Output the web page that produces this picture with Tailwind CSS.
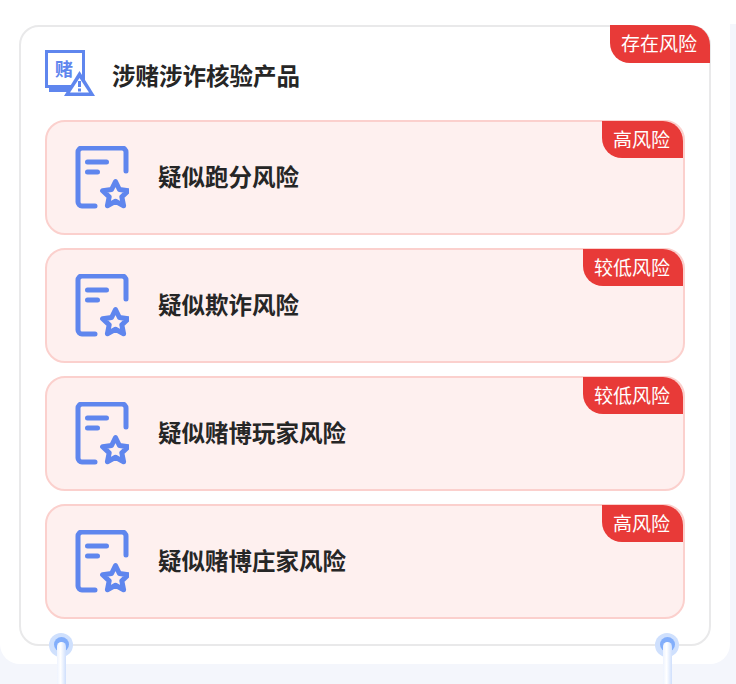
<!DOCTYPE html>
<html lang="zh-CN">
  <head>
    <meta charset="UTF-8" />
    <meta name="viewport" content="width=device-width, initial-scale=1.0" />
    <title>涉赌涉诈核验产品</title>
    <script src="https://cdn.jsdelivr.net/npm/@tailwindcss/browser@4"></script>
  </head>
  <body class="relative h-[684px] w-[736px] overflow-hidden bg-[#f4f6fc] font-['Noto_Sans_CJK_SC','Noto_Sans',sans-serif]">
    <svg width="0" height="0" class="absolute">
      <symbol id="doc-star" viewBox="0 0 54 63">
        <path d="M51 25V6a4 4 0 0 0-4-4H7a4 4 0 0 0-4 4v50a4 4 0 0 0 4 4h13" fill="none" stroke="#5f86ee" stroke-width="5" stroke-linecap="round" />
        <path d="M12.500 16h19M12.500 26h10" fill="none" stroke="#5f86ee" stroke-width="5" stroke-linecap="round" />
        <path d="M40.500 35.500l3.900 8 9 1.200-6.600 6.100 1.800 8.900-8.100-4.500-8.100 4.500 1.800-8.900-6.600-6.100 9-1.200z" fill="none" stroke="#5f86ee" stroke-width="5" stroke-linejoin="round" />
      </symbol>
    </svg>

    <div class="h-[24px] w-full bg-white"></div>
    <div class="h-[640px] w-[730px] rounded-b-[20px] bg-white pt-[1px] pl-[19px]">
      <div class="relative h-[621px] w-[692px] rounded-[20px] border-2 border-[#e9e9ea] pt-[23px] pl-[24px]">
        <span class="absolute -top-[2px] -right-[1px] flex h-[38px] items-center rounded-tr-[20px] rounded-bl-[20px] bg-[#e83a38] pr-[13px] pb-[1px] pl-[11px] text-[19px] text-white">存在风险</span>

        <div class="flex h-[48px] items-center">
          <div class="relative h-[46px] w-[50px] shrink-0 self-start">
            <div class="flex h-[38px] w-[40px] items-center justify-center border-[3.500px] border-[#5f86ee] pr-[2px] pb-[2px] text-[18px] leading-none font-bold text-[#5f86ee]">赌</div>
            <div class="absolute top-[38px] left-[4px] h-[4px] w-[20px] bg-[#5f86ee]"></div>
            <svg class="absolute top-[21px] left-[19px]" width="31" height="25" viewBox="0 0 31 25">
              <path d="M15.500 0 31 25H0z" fill="#5f86ee" />
              <path d="M15.500 7 25 21.500H6z" fill="#fff" />
              <path d="M15.500 10v6M15.500 17.500v3" stroke="#5f86ee" stroke-width="3" />
            </svg>
          </div>
          <h1 class="ml-[17px] pt-[3px] text-[23.500px] leading-none font-bold text-[#262626]">涉赌涉诈核验产品</h1>
        </div>

        <div class="mt-[22px] flex w-[640px] flex-col gap-[13px]">
          <div class="relative flex h-[115px] items-center rounded-[20px] border-2 border-[#fbd0cd] bg-[#fef0ef] pl-[28px]">
            <svg width="54" height="63" class="shrink-0"><use href="#doc-star" /></svg>
            <span class="ml-[29px] pb-[2px] text-[23.500px] leading-none font-bold text-[#262626]">疑似跑分风险</span>
            <span class="absolute -top-[1px] right-0 flex h-[37px] items-center rounded-tr-[20px] rounded-bl-[20px] bg-[#e83a38] pr-[13px] pl-[11px] text-[19px] text-white">高风险</span>
          </div>
          <div class="relative flex h-[115px] items-center rounded-[20px] border-2 border-[#fbd0cd] bg-[#fef0ef] pl-[28px]">
            <svg width="54" height="63" class="shrink-0"><use href="#doc-star" /></svg>
            <span class="ml-[29px] pb-[2px] text-[23.500px] leading-none font-bold text-[#262626]">疑似欺诈风险</span>
            <span class="absolute -top-[1px] right-0 flex h-[37px] items-center rounded-tr-[20px] rounded-bl-[20px] bg-[#e83a38] pr-[13px] pl-[11px] text-[19px] text-white">较低风险</span>
          </div>
          <div class="relative flex h-[115px] items-center rounded-[20px] border-2 border-[#fbd0cd] bg-[#fef0ef] pl-[28px]">
            <svg width="54" height="63" class="shrink-0"><use href="#doc-star" /></svg>
            <span class="ml-[29px] pb-[2px] text-[23.500px] leading-none font-bold text-[#262626]">疑似赌博玩家风险</span>
            <span class="absolute -top-[1px] right-0 flex h-[37px] items-center rounded-tr-[20px] rounded-bl-[20px] bg-[#e83a38] pr-[13px] pl-[11px] text-[19px] text-white">较低风险</span>
          </div>
          <div class="relative flex h-[115px] items-center rounded-[20px] border-2 border-[#fbd0cd] bg-[#fef0ef] pl-[28px]">
            <svg width="54" height="63" class="shrink-0"><use href="#doc-star" /></svg>
            <span class="ml-[29px] pb-[2px] text-[23.500px] leading-none font-bold text-[#262626]">疑似赌博庄家风险</span>
            <span class="absolute -top-[1px] right-0 flex h-[37px] items-center rounded-tr-[20px] rounded-bl-[20px] bg-[#e83a38] pr-[13px] pl-[11px] text-[19px] text-white">高风险</span>
          </div>
        </div>
      </div>
    </div>

    <!-- connectors -->
    <div class="absolute top-[633px] left-[49px] h-[24px] w-[24px] rounded-full bg-[#cfe0fd]"></div>
    <div class="absolute top-[637px] left-[54px] h-[15px] w-[15px] rounded-full bg-[#82aefb]"></div>
    <div class="absolute top-[642px] left-[57px] h-[42px] w-[9px] rounded-t-full bg-linear-to-r from-[#eef3fe] via-white via-40% to-[#cfdffc]"></div>
    <div class="absolute top-[633px] left-[655px] h-[24px] w-[24px] rounded-full bg-[#cfe0fd]"></div>
    <div class="absolute top-[637px] left-[660px] h-[15px] w-[15px] rounded-full bg-[#82aefb]"></div>
    <div class="absolute top-[642px] left-[663px] h-[42px] w-[9px] rounded-t-full bg-linear-to-r from-[#eef3fe] via-white via-40% to-[#cfdffc]"></div>
  </body>
</html>
